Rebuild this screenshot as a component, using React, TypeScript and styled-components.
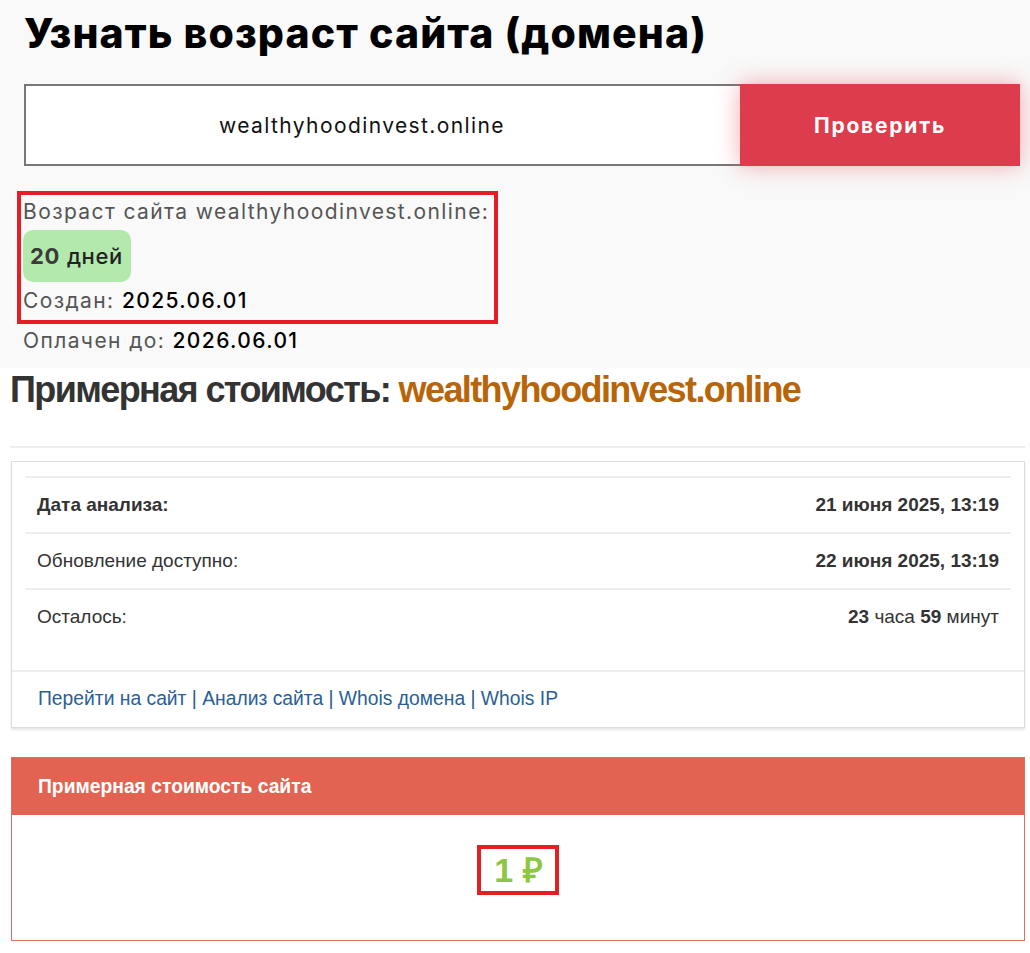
import styled, { createGlobalStyle } from "styled-components";

const GlobalStyle = createGlobalStyle`
  html, body {
    margin: 0;
    padding: 0;
    background: #ffffff;
  }
  * {
    box-sizing: border-box;
  }
`;

const AgeSection = styled.section`
  background: #f9f9f9;
  padding: 8px 10px 10px 23px;
  font-family: "Inter", "Noto Sans", sans-serif;
`;

const Title = styled.h1`
  margin: 0 0 26px 1px;
  font-size: 41px;
  font-weight: 800;
  line-height: 50px;
  color: #000;
  letter-spacing: 1.1px;
`;

const CheckForm = styled.form`
  display: flex;
  height: 82px;
  margin-left: 1px;
`;

const DomainInput = styled.input`
  flex: 1;
  min-width: 0;
  padding: 0 42px 0 0;
  border: 2px solid #777;
  border-right: none;
  background: #fff;
  text-align: center;
  font-family: inherit;
  font-size: 21px;
  letter-spacing: 1.4px;
  color: #111;
  outline: none;
`;

const CheckButton = styled.button`
  width: 280px;
  border: none;
  background: #dc3c4b;
  color: #fff;
  font-family: inherit;
  font-size: 21px;
  font-weight: 700;
  letter-spacing: 1.8px;
  box-shadow: 0 0 22px rgba(225, 70, 85, 0.45);
  cursor: pointer;
`;

const Highlight = styled.div`
  display: inline-flex;
  flex-direction: column;
  align-items: flex-start;
  margin: 25px 0 0 -6px;
  padding: 0 5px 0 2px;
  border: 4px solid #e31e24;
`;

const InfoLine = styled.div<{ $lh?: number }>`
  font-size: 21px;
  letter-spacing: 1.4px;
  line-height: ${(p) => p.$lh ?? 34}px;
  color: #555;
  white-space: nowrap;
`;

const Value = styled.span`
  color: #000;
  font-weight: 500;
`;

const AgeBadge = styled.div`
  display: inline-flex;
  align-items: center;
  gap: 7px;
  height: 52px;
  padding: 0 8px 0 7px;
  margin-top: 1px;
  border-radius: 10px;
  background: #b4e9ae;
  font-size: 22px;
  letter-spacing: 0.6px;
  font-weight: 500;
  color: #222;
`;

const BadgeNumber = styled.b`
  font-weight: 700;
  color: #3a3a3a;
`;

const PriceSection = styled.section`
  padding: 2px 5px 12px 10px;
  font-family: "Liberation Sans", Arial, sans-serif;
  color: #333;
`;

const PriceTitle = styled.h2`
  margin: 0;
  padding-bottom: 36px;
  border-bottom: 2px solid #eee;
  font-size: 36px;
  font-weight: 700;
  line-height: 40px;
  letter-spacing: -1.6px;
  color: #333;
`;

const DomainAccent = styled.span`
  color: #b8650a;
`;

const Panel = styled.div`
  margin: 13px 0 0 1px;
  border: 1px solid #ddd;
  background: #fff;
  box-shadow: 0 2px 2px rgba(0, 0, 0, 0.1);
`;

const PanelBody = styled.div`
  padding: 14px 13px 26px;
`;

const InfoTable = styled.div`
  display: flex;
  flex-direction: column;
`;

const Row = styled.div`
  display: flex;
  justify-content: space-between;
  align-items: center;
  height: 56px;
  padding: 0 12px;
  border-top: 2px solid #eee;
  font-size: 19px;
`;

const Label = styled.span<{ $bold?: boolean }>`
  font-weight: ${(p) => (p.$bold ? 700 : 400)};
`;

const Strong = styled.b`
  font-weight: 700;
`;

const PanelFooter = styled.div`
  padding: 16px 26px 17px;
  border-top: 2px solid #eee;
  font-size: 19.3px;
  line-height: 22px;
  color: #2a5a8c;
`;

const FooterLink = styled.a`
  color: #2a5f96;
  text-decoration: none;
`;

const CostPanel = styled.div`
  margin: 29px 0 0 1px;
  border: 1px solid #dc6e5f;
`;

const CostHeader = styled.div`
  display: flex;
  align-items: center;
  height: 57px;
  padding: 0 26px;
  background: #e36353;
  color: #fff;
  font-size: 19.3px;
  font-weight: 700;
`;

const CostBody = styled.div`
  display: flex;
  justify-content: center;
  align-items: center;
  height: 125px;
  padding-bottom: 16px;
  background: #fff;
`;

const CostValue = styled.span`
  padding: 2px 12px 2px 13px;
  border: 4px solid #e31e24;
  font-size: 34px;
  font-weight: 700;
  line-height: 38px;
  color: #8dc63f;
`;

const links = ["Перейти на сайт", "Анализ сайта", "Whois домена", "Whois IP"];

function App() {
  const domain = "wealthyhoodinvest.online";

  return (
    <>
      <GlobalStyle />
      <AgeSection>
        <Title>Узнать возраст сайта (домена)</Title>
        <CheckForm onSubmit={(e) => e.preventDefault()}>
          <DomainInput defaultValue={domain} />
          <CheckButton type="submit">Проверить</CheckButton>
        </CheckForm>
        <Highlight>
          <InfoLine>Возраст сайта {domain}:</InfoLine>
          <AgeBadge>
            <BadgeNumber>20</BadgeNumber>дней
          </AgeBadge>
          <InfoLine $lh={38}>
            Создан: <Value>2025.06.01</Value>
          </InfoLine>
        </Highlight>
        <InfoLine>
          Оплачен до: <Value>2026.06.01</Value>
        </InfoLine>
      </AgeSection>

      <PriceSection>
        <PriceTitle>
          Примерная стоимость: <DomainAccent>{domain}</DomainAccent>
        </PriceTitle>
        <Panel>
          <PanelBody>
            <InfoTable>
              <Row>
                <Label $bold>Дата анализа:</Label>
                <Strong>21 июня 2025, 13:19</Strong>
              </Row>
              <Row>
                <Label>Обновление доступно:</Label>
                <Strong>22 июня 2025, 13:19</Strong>
              </Row>
              <Row>
                <Label>Осталось:</Label>
                <span>
                  <Strong>23</Strong> часа <Strong>59</Strong> минут
                </span>
              </Row>
            </InfoTable>
          </PanelBody>
          <PanelFooter>
            {links.map((l, i) => (
              <span key={l}>
                <FooterLink href="#">{l}</FooterLink>
                {i < links.length - 1 ? " | " : ""}
              </span>
            ))}
          </PanelFooter>
        </Panel>
        <CostPanel>
          <CostHeader>Примерная стоимость сайта</CostHeader>
          <CostBody>
            <CostValue>1 ₽</CostValue>
          </CostBody>
        </CostPanel>
      </PriceSection>
    </>
  );
}

export default App;
